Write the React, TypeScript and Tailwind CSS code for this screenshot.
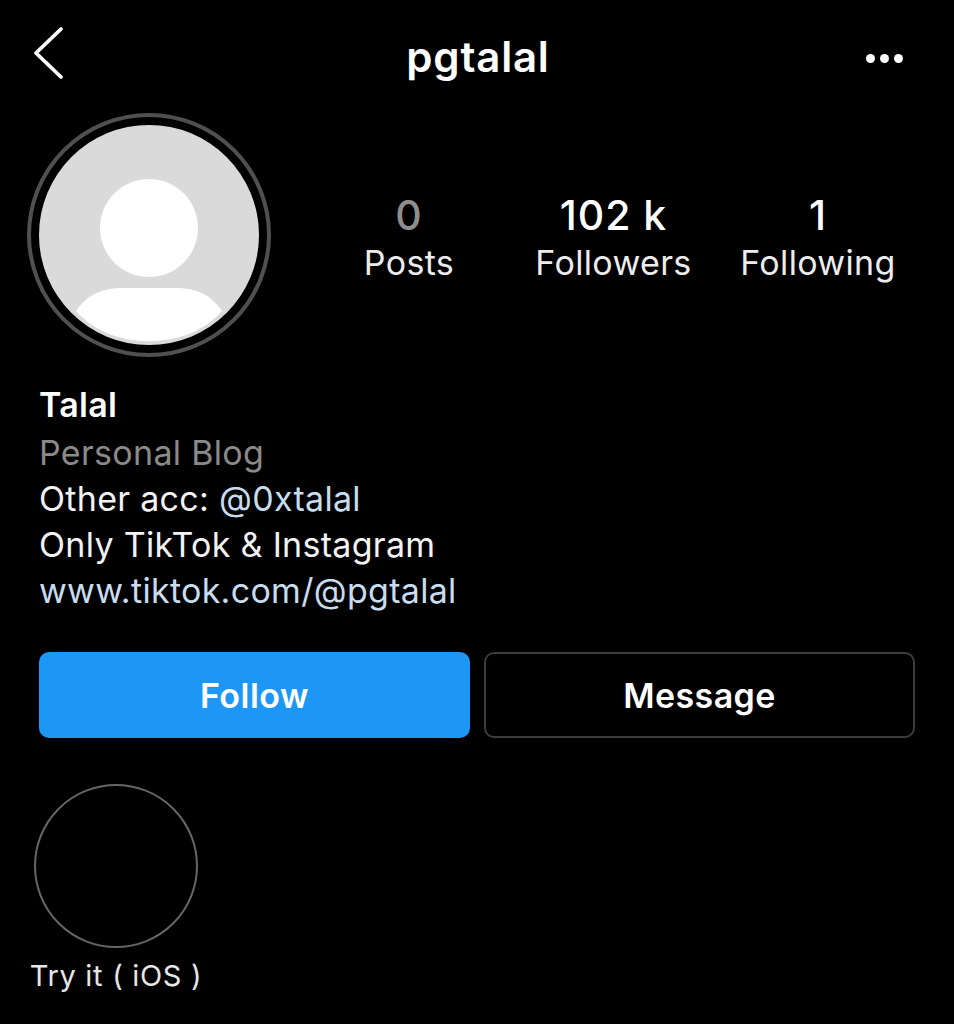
const stats = [
  { value: '0', label: 'Posts', muted: true, width: 'w-[204px]' },
  { value: '102 k', label: 'Followers', muted: false, width: 'w-[205px]' },
  { value: '1', label: 'Following', muted: false, width: 'w-[204px]' },
];

function Avatar() {
  return (
    <div className="w-[244px] h-[244px] shrink-0 rounded-full border-[4px] border-[#505050] p-[8px]">
      <svg viewBox="0 0 220 220" className="block w-full h-full">
        <defs>
          <clipPath id="disc">
            <circle cx="110" cy="110" r="110" />
          </clipPath>
        </defs>
        <circle cx="110" cy="110" r="110" fill="#dadada" />
        <circle cx="110" cy="103" r="49" fill="#ffffff" />
        <g clipPath="url(#disc)">
          <path
            d="M37 186 C48 170 62 163 85 163 L135 163 C158 163 172 170 183 186 C165 206 140 216 110 216 C80 216 55 206 37 186 Z"
            fill="#ffffff"
          />
        </g>
      </svg>
    </div>
  );
}

export default function App() {
  return (
    <div className="w-[954px] h-[1024px] bg-black text-white overflow-hidden font-['Inter',sans-serif]">
      {/* Header */}
      <div className="h-[113px] pt-[18px] pl-[32px] pr-[51px] flex items-start justify-between">
        <svg width="32" height="54" viewBox="0 0 32 54" fill="none" className="mt-[8px]">
          <path d="M29 3 L4 27 L29 51" stroke="#ffffff" strokeWidth="3.8" strokeLinecap="round" strokeLinejoin="round" />
        </svg>
        <h1 className="text-[42px] leading-[80px] tracking-[0.8px] font-semibold -mt-[1px] ml-[26px]">pgtalal</h1>
        <div className="flex gap-[5px] pt-[36px] w-[37px]">
          <span className="w-[9px] h-[9px] rounded-full bg-white" />
          <span className="w-[9px] h-[9px] rounded-full bg-white" />
          <span className="w-[9px] h-[9px] rounded-full bg-white" />
        </div>
      </div>

      {/* Avatar and counts */}
      <div className="flex items-start pl-[27px]">
        <Avatar />
        <div className="flex pl-[36px] pt-[77px]">
          {stats.map(stat => (
            <div key={stat.label} className={`${stat.width} flex flex-col items-center`}>
              <span className={`text-[41px] leading-[50px] tracking-[1px] font-medium ${stat.muted ? 'text-[#8e8e8e]' : 'text-white'}`}>
                {stat.value}
              </span>
              <span className="text-[34px] leading-[46px] tracking-[0.35px] text-[#ececec]">{stat.label}</span>
            </div>
          ))}
        </div>
      </div>

      {/* Bio */}
      <div className="pl-[39px] pt-[25px] text-[34px] leading-[46px] tracking-[0.3px] text-[#f2f2f2]">
        <p className="font-semibold text-white mb-[2px]">Talal</p>
        <p className="text-[#8a8a8a]">Personal Blog</p>
        <p>
          Other acc: <span className="text-[#c7dcee]">@0xtalal</span>
        </p>
        <p>Only TikTok &amp; Instagram</p>
        <p className="text-[#c7dcee]">www.tiktok.com/@pgtalal</p>
      </div>

      {/* Actions */}
      <div className="flex gap-[14px] pl-[39px] pt-[38px]">
        <button className="w-[431px] h-[86px] rounded-[10px] bg-[#1c97f5] text-[34px] tracking-[0.5px] font-semibold text-white">
          Follow
        </button>
        <button className="w-[431px] h-[86px] rounded-[10px] border-2 border-[#3c3c3c] text-[34px] tracking-[0.4px] font-semibold text-white">
          Message
        </button>
      </div>

      {/* Highlight */}
      <div className="w-[176px] ml-[28px] mt-[46px] flex flex-col items-center">
        <div className="w-[164px] h-[164px] rounded-full border-2 border-[#666666]" />
        <span className="mt-[9px] text-[29px] leading-[38px] tracking-[0.7px] whitespace-nowrap text-[#e6e6e6]">Try it ( iOS )</span>
      </div>
    </div>
  );
}
